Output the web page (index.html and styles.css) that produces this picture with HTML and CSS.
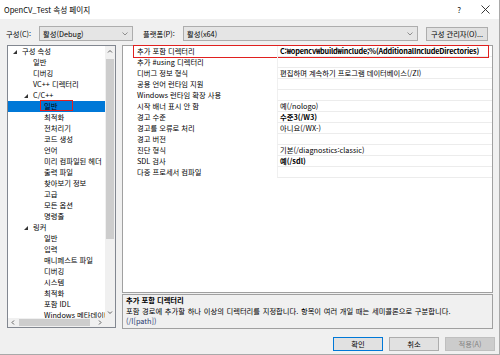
FILE: index.html
```html
<!DOCTYPE html>
<html lang="ko">
<head>
    <meta charset="UTF-8">
    <meta name="viewport" content="width=device-width, initial-scale=1.0">
    <title>OpenCV_Test 속성 페이지</title>
    <link rel="stylesheet" href="styles.css">
</head>
<body>
<div class="window">

    <div class="titlebar">
        <span class="title">OpenCV_Test 속성 페이지</span>
        <span class="help">?</span>
        <svg class="close" width="9" height="9" viewBox="0 0 9 9">
            <path d="M0.5 0.5 L8.5 8.5 M8.5 0.5 L0.5 8.5" stroke="#222" stroke-width="0.9" fill="none"/>
        </svg>
    </div>

    <div class="toolbar">
        <span class="lbl lbl-config">구성(C):</span>
        <div class="combo combo-config">
            <span>활성(Debug)</span>
            <svg width="6" height="4" viewBox="0 0 6 4"><path d="M0.5 0.5 L3 3 L5.5 0.5" stroke="#777" stroke-width="0.8" fill="none"/></svg>
        </div>
        <span class="lbl lbl-platform">플랫폼(P):</span>
        <div class="combo combo-platform">
            <span>활성(x64)</span>
            <svg width="6" height="4" viewBox="0 0 6 4"><path d="M0.5 0.5 L3 3 L5.5 0.5" stroke="#777" stroke-width="0.8" fill="none"/></svg>
        </div>
        <button type="button" class="btn btn-manager">구성 관리자(O)...</button>
    </div>

    <div class="main">
        <div class="tree">
            <ul class="tree-list">
                <li class="node lv0"><i class="exp"></i>구성 속성</li>
                <li class="node lv1">일반</li>
                <li class="node lv1">디버깅</li>
                <li class="node lv1">VC++ 디렉터리</li>
                <li class="node lv1"><i class="exp"></i>C/C++</li>
                <li class="node lv2 selected">일반<span class="mark"></span></li>
                <li class="node lv2">최적화</li>
                <li class="node lv2">전처리기</li>
                <li class="node lv2">코드 생성</li>
                <li class="node lv2">언어</li>
                <li class="node lv2">미리 컴파일된 헤더</li>
                <li class="node lv2">출력 파일</li>
                <li class="node lv2">찾아보기 정보</li>
                <li class="node lv2">고급</li>
                <li class="node lv2">모든 옵션</li>
                <li class="node lv2">명령줄</li>
                <li class="node lv1"><i class="exp"></i>링커</li>
                <li class="node lv2">일반</li>
                <li class="node lv2">입력</li>
                <li class="node lv2">매니페스트 파일</li>
                <li class="node lv2">디버깅</li>
                <li class="node lv2">시스템</li>
                <li class="node lv2">최적화</li>
                <li class="node lv2">포함 IDL</li>
                <li class="node lv2">Windows 메타데이터</li>
                <li class="node lv2">고급</li>
            </ul>
            <div class="vscroll">
                <svg class="arrow" width="10" height="11" viewBox="0 0 10 11"><path d="M3 6.5 L5 4.5 L7 6.5" stroke="#606060" stroke-width="1" fill="none"/></svg>
                <div class="vtrack"><div class="vthumb"></div></div>
                <svg class="arrow" width="10" height="11" viewBox="0 0 10 11"><path d="M3 4.5 L5 6.5 L7 4.5" stroke="#606060" stroke-width="1" fill="none"/></svg>
            </div>
            <div class="hscroll">
                <svg class="arrow" width="10" height="9" viewBox="0 0 10 9"><path d="M6 2.5 L4 4.5 L6 6.5" stroke="#606060" stroke-width="1" fill="none"/></svg>
                <div class="htrack"><div class="hthumb"></div></div>
                <svg class="arrow" width="10" height="9" viewBox="0 0 10 9"><path d="M4 2.5 L6 4.5 L4 6.5" stroke="#606060" stroke-width="1" fill="none"/></svg>
            </div>
            <div class="corner"></div>
        </div>

        <div class="side">
            <div class="grid">
                <div class="prop current">
                    <span class="name">추가 포함 디렉터리</span>
                    <span class="val bold path">C:₩opencv₩build₩include;%(AdditionalIncludeDirectories)</span>
                    <span class="mark"></span>
                </div>
                <div class="prop"><span class="name">추가 #using 디렉터리</span><span class="val"></span></div>
                <div class="prop"><span class="name">디버그 정보 형식</span><span class="val">편집하며 계속하기 프로그램 데이터베이스(/ZI)</span></div>
                <div class="prop"><span class="name">공용 언어 런타임 지원</span><span class="val"></span></div>
                <div class="prop"><span class="name">Windows 런타임 확장 사용</span><span class="val"></span></div>
                <div class="prop"><span class="name">시작 배너 표시 안 함</span><span class="val">예(/nologo)</span></div>
                <div class="prop"><span class="name">경고 수준</span><span class="val bold">수준3(/W3)</span></div>
                <div class="prop"><span class="name">경고를 오류로 처리</span><span class="val">아니요(/WX-)</span></div>
                <div class="prop"><span class="name">경고 버전</span><span class="val"></span></div>
                <div class="prop"><span class="name">진단 형식</span><span class="val">기본(/diagnostics:classic)</span></div>
                <div class="prop"><span class="name">SDL 검사</span><span class="val bold">예(/sdl)</span></div>
                <div class="prop"><span class="name">다중 프로세서 컴파일</span><span class="val"></span></div>
            </div>
            <div class="desc">
                <div class="desc-title">추가 포함 디렉터리</div>
                <div class="desc-text">포함 경로에 추가할 하나 이상의 디렉터리를 지정합니다. 항목이 여러 개일 때는 세미콜론으로 구분합니다.</div>
                <div class="desc-switch">(/I[path])</div>
            </div>
        </div>
    </div>

    <div class="footer">
        <button type="button" class="btn btn-default">확인</button>
        <button type="button" class="btn">취소</button>
        <button type="button" class="btn" disabled>적용(A)</button>
    </div>

</div>
</body>
</html>
```

FILE: styles.css
```css
body {
    margin: 0;
    font-family: "Noto Sans CJK KR", "Noto Sans", sans-serif;
    font-size: 7.3px;
    color: #000;
}

.window {
    width: 499px;
    height: 354px;
    background-color: #f0f0f0;
    border-right: 1px solid #a9a9a9;
    border-bottom: 1px solid #a9a9a9;
    display: flex;
    flex-direction: column;
}

/* title bar */
.titlebar {
    height: 19px;
    background-color: #fff;
    display: flex;
    align-items: center;
    padding-left: 4px;
}

.title {
    flex: 1;
    font-size: 7.6px;
}

.help {
    font-size: 8px;
    margin-right: 20px;
    color: #222;
}

.close {
    margin-right: 9px;
}

/* configuration row */
.toolbar {
    display: flex;
    align-items: center;
    margin-top: 7px;
    height: 15px;
    padding-left: 6px;
}

.lbl-config {
    width: 33px;
}

.lbl-platform {
    width: 40px;
    margin-left: 10px;
}

.combo {
    height: 15px;
    box-sizing: border-box;
    border: 1px solid #adadad;
    background-color: #e5e5e5;
    display: flex;
    align-items: center;
    justify-content: space-between;
    padding: 0 4px 0 3px;
}

.combo-config {
    width: 94px;
}

.combo-platform {
    width: 235px;
}

.btn {
    font-family: inherit;
    font-size: 7.3px;
    color: #000;
    background-color: #e1e1e1;
    border: 1px solid #adadad;
    padding: 0;
    margin: 0;
    height: 14px;
    box-sizing: border-box;
}

.btn-manager {
    width: 62px;
    margin-left: 8px;
}

/* main area */
.main {
    display: flex;
    margin-top: 4px;
    padding-left: 7px;
    gap: 6px;
}

.tree {
    width: 109px;
    height: 283px;
    box-sizing: border-box;
    border: 1px solid #828790;
    background-color: #fff;
    display: grid;
    grid-template-columns: 1fr 10px;
    grid-template-rows: 1fr 9px;
}

.tree-list {
    list-style: none;
    margin: 0;
    padding: 0;
    overflow: hidden;
}

.node {
    height: 11px;
    line-height: 11px;
    white-space: nowrap;
    position: relative;
}

.lv0 {
    padding-left: 14px;
}

.lv1 {
    padding-left: 25px;
}

.lv2 {
    padding-left: 36px;
}

.exp {
    display: inline-block;
    width: 0;
    height: 0;
    border-left: 4px solid transparent;
    border-bottom: 4px solid #333;
    margin-left: -9px;
    margin-right: 5px;
    vertical-align: 0;
}

.selected {
    background-color: #0078d7;
}

.node .mark {
    position: absolute;
    left: 32px;
    top: -1px;
    width: 33px;
    height: 11px;
    box-sizing: border-box;
    border: 1.5px solid #e0201f;
}

.vscroll {
    background-color: #f0f0f0;
    display: flex;
    flex-direction: column;
}

.vtrack {
    flex: 1;
    padding: 2px 1px;
}

.vthumb {
    height: 180px;
    background-color: #cdcdcd;
}

.hscroll {
    background-color: #f0f0f0;
    display: flex;
    align-items: center;
}

.htrack {
    flex: 1;
    height: 100%;
    padding: 1px 1px;
    box-sizing: border-box;
}

.hthumb {
    width: 71px;
    height: 100%;
    background-color: #cdcdcd;
}

.corner {
    background-color: #f0f0f0;
}

.arrow {
    display: block;
    flex: none;
}

/* property grid */
.side {
    width: 371px;
    display: flex;
    flex-direction: column;
    gap: 1px;
}

.grid {
    height: 248px;
    box-sizing: border-box;
    border: 1px solid #a0a0a0;
    background-color: #fff;
}

.prop {
    display: grid;
    grid-template-columns: 154px 1fr;
    height: 11px;
    line-height: 11px;
    position: relative;
    white-space: nowrap;
}

.prop .name {
    padding-left: 14px;
}

.prop .val {
    padding-left: 2px;
    border-left: 1px solid #f0f0f0;
    border-bottom: 1px solid #ececec;
    overflow: hidden;
}

.bold {
    font-weight: bold;
}

.path {
    letter-spacing: -0.2px;
}

.prop .mark {
    position: absolute;
    left: 10px;
    right: 3px;
    top: -1px;
    bottom: -1px;
    border: 1.5px solid #e0201f;
}

.desc {
    height: 35px;
    box-sizing: border-box;
    border: 1px solid #a0a0a0;
    padding: 0 3px;
    line-height: 10.5px;
}

.desc-title {
    font-weight: bold;
}

.desc-text {
    word-spacing: 0.6px;
}

.desc-switch {
    color: #263a6e;
}

/* dialog buttons */
.footer {
    display: flex;
    justify-content: flex-end;
    gap: 6px;
    margin-top: 8px;
    padding-right: 4px;
}

.footer .btn {
    width: 50px;
}

.btn-default {
    border-color: #0078d7;
}

.btn:disabled {
    background-color: #cccccc;
    border-color: #bfbfbf;
    color: #838383;
}
```
